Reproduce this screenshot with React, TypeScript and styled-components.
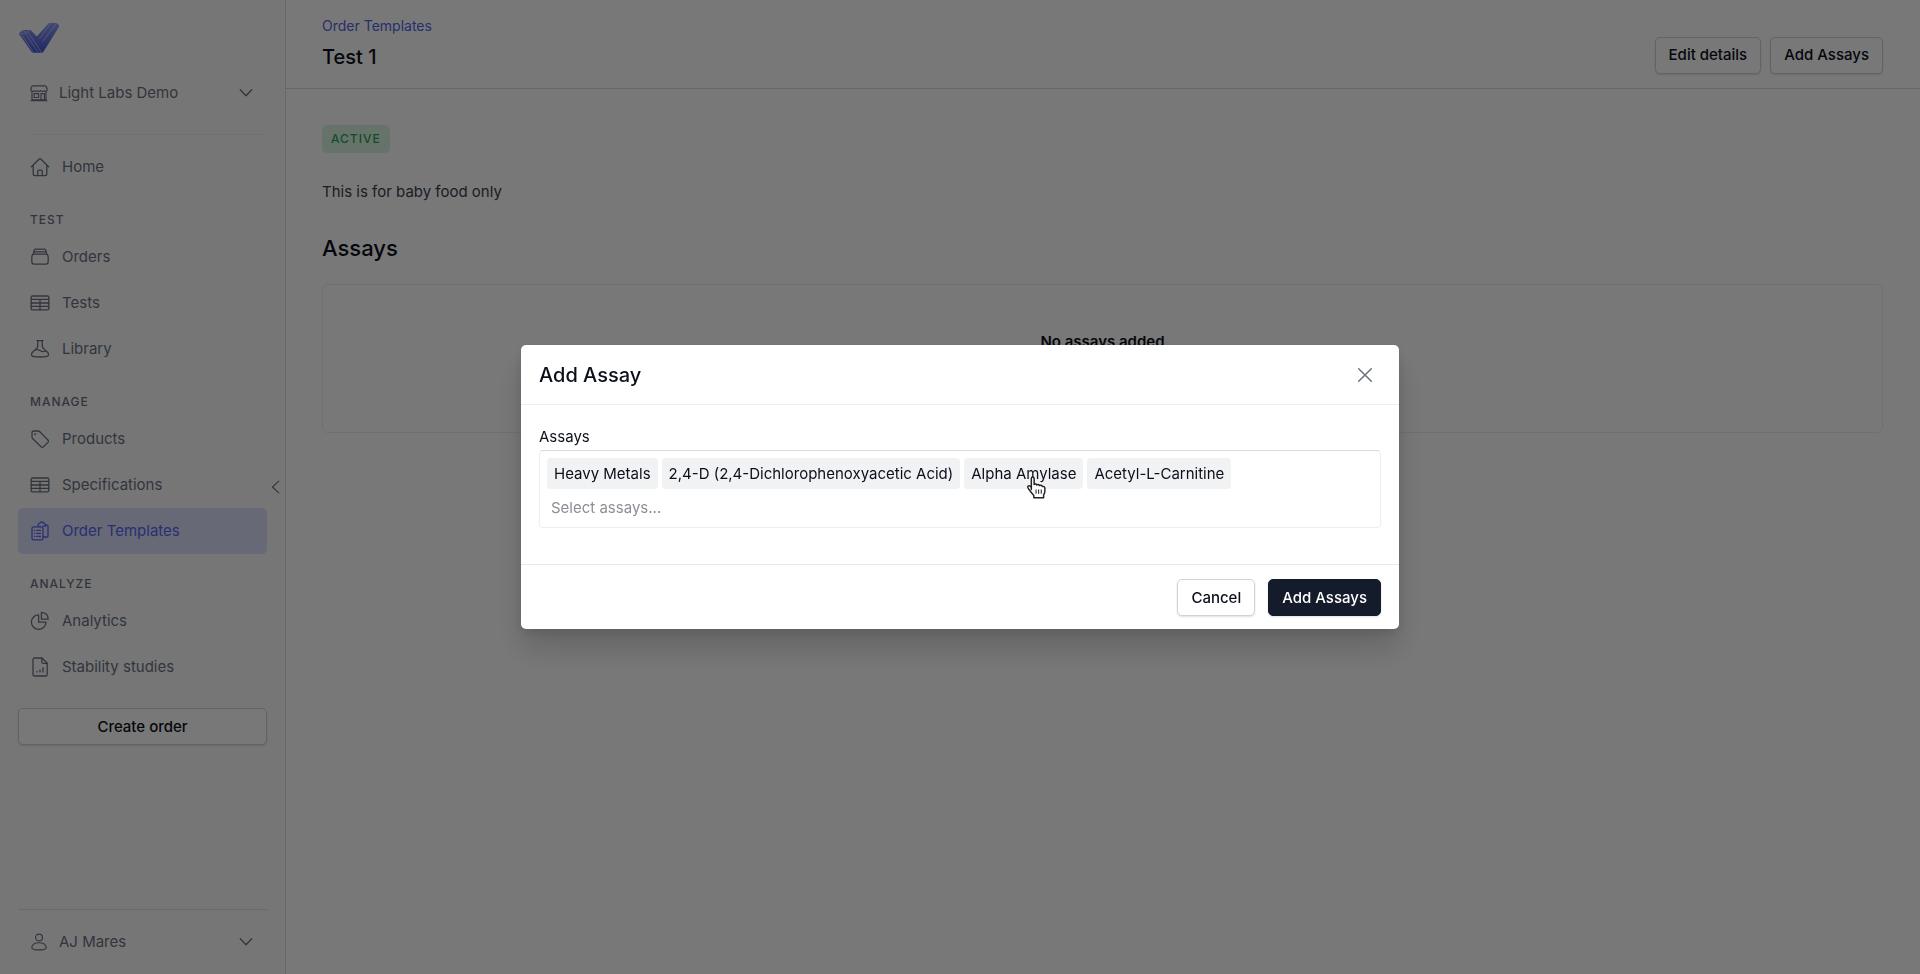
import React from "react";
import styled, { createGlobalStyle, css } from "styled-components";

const GlobalStyle = createGlobalStyle`
  *, *::before, *::after { box-sizing: border-box; }
  body {
    margin: 0;
    background: #ffffff;
    color: #0b0f1a;
    font-family: Inter, "Liberation Sans", sans-serif;
    font-size: 15px;
    line-height: 24px;
  }
  button, input { font: inherit; color: inherit; }
  h1, h2, h3, p { margin: 0; padding: 0; }
`;

const Page = styled.div`
  display: flex;
  min-height: 100vh;
`;

const Sidebar = styled.aside`
  position: relative;
  display: flex;
  flex-direction: column;
  flex: none;
  width: 286px;
  padding: 22px 18px 8px;
  background: #fbfbfd;
  border-right: 1px solid #dcdee4;
  color: #6b7280;
`;

const Logo = styled.svg`
  display: block;
  width: 42px;
  height: 32px;
`;

const Account = styled.button<{ $top?: boolean }>`
  display: flex;
  align-items: center;
  gap: 11px;
  width: 100%;
  height: 48px;
  padding: 0 12px;
  border: 0;
  background: none;
  text-align: left;
  svg { flex: none; width: 18px; height: 18px; }
  svg:last-child { margin-left: auto; }
  ${(p) => p.$top && css`margin: 15px 0 17px;`}
`;

const Rule = styled.hr<{ $inset?: boolean }>`
  margin: 0;
  border: 0;
  border-top: 1px solid ${(p) => (p.$inset ? "#eef0f4" : "#e0e2e8")};
  ${(p) => p.$inset && css`margin-left: 12px;`}
`;

const Nav = styled.nav`
  display: flex;
  flex-direction: column;
  padding-top: 9px;
`;

const Group = styled.h2`
  margin: 18px 0 2px;
  padding: 0 12px;
  font-size: 12px;
  line-height: 24px;
  font-weight: 500;
  letter-spacing: 1px;
`;

const Item = styled.a<{ $active?: boolean }>`
  display: flex;
  align-items: center;
  gap: 12px;
  height: 46px;
  padding: 0 12px;
  border-radius: 5px;
  color: ${(p) => (p.$active ? "#5664f5" : "inherit")};
  background: ${(p) => (p.$active ? "#dcdffb" : "none")};
  text-decoration: none;
  svg { flex: none; width: 20px; height: 20px; }
`;

const Collapse = styled.button`
  position: absolute;
  top: 50%;
  right: 0;
  display: flex;
  align-items: center;
  justify-content: center;
  width: 18px;
  height: 24px;
  margin-top: -12px;
  padding: 0;
  border: 0;
  background: none;
`;

const Button = styled.button<{ $primary?: boolean; $wide?: boolean }>`
  height: 37px;
  padding: 0 13px;
  border: 1px solid ${(p) => (p.$primary ? "#141b2b" : "#d0d2d6")};
  border-radius: 5px;
  background: ${(p) => (p.$primary ? "#141b2b" : "#ffffff")};
  color: ${(p) => (p.$primary ? "#ffffff" : "#0b0f1a")};
  box-shadow: 0 1px 2px rgba(0, 0, 0, 0.12);
  font-weight: 500;
  ${(p) => p.$wide && css`width: 100%; margin-top: 18px;`}
`;

const Footer = styled.div`
  display: flex;
  flex-direction: column;
  gap: 8px;
  margin-top: auto;
`;

const Main = styled.main`
  flex: 1;
  min-width: 0;
`;

const Header = styled.header`
  display: flex;
  align-items: center;
  justify-content: space-between;
  height: 89px;
  padding: 0 37px 0 36px;
  border-bottom: 1px solid #d6d8dc;
`;

const Crumb = styled.a`
  display: block;
  color: #5664e8;
  font-size: 14px;
  line-height: 22px;
  text-decoration: none;
`;

const Title = styled.h1`
  padding: 6px 0 2px;
  font-size: 20px;
  line-height: 28px;
  font-weight: 500;
`;

const Actions = styled.div`
  display: flex;
  gap: 9px;
  padding-top: 22px;
`;

const Content = styled.div`
  display: flex;
  flex-direction: column;
  align-items: flex-start;
  padding: 36px 37px 36px 36px;
`;

const Badge = styled.span`
  padding: 2px 9px;
  border-radius: 5px;
  background: #d9f5e2;
  color: #2f9e55;
  font-size: 12px;
  line-height: 24px;
  font-weight: 500;
  letter-spacing: 1px;
`;

const Description = styled.p`
  margin: 27px 0 28px;
  color: #3d404a;
`;

const SectionTitle = styled.h2`
  font-size: 22px;
  line-height: 32px;
  font-weight: 500;
`;

const Empty = styled.section`
  align-self: stretch;
  height: 149px;
  margin-top: 20px;
  padding-top: 45px;
  border: 1px solid #eceef1;
  border-radius: 6px;
  text-align: center;
`;

const EmptyTitle = styled.h3`
  font-size: 15px;
  line-height: 24px;
  font-weight: 600;
`;

const Backdrop = styled.div`
  position: fixed;
  inset: 0;
  display: flex;
  align-items: center;
  justify-content: center;
  background: rgba(0, 0, 0, 0.53);
`;

const Dialog = styled.section`
  width: 878px;
  max-width: 90vw;
  border-radius: 5px;
  background: #ffffff;
  box-shadow: 0 20px 30px rgba(0, 0, 0, 0.16), 0 4px 12px rgba(0, 0, 0, 0.1);
`;

const DialogHead = styled.header`
  display: flex;
  align-items: center;
  justify-content: space-between;
  height: 60px;
  padding: 0 25px 0 18px;
  border-bottom: 1px solid #eceef0;
`;

const DialogTitle = styled.h2`
  font-size: 20px;
  line-height: 28px;
  font-weight: 500;
`;

const Close = styled.button`
  display: flex;
  padding: 0;
  border: 0;
  background: none;
  color: #6b7280;
`;

const DialogBody = styled.div`
  padding: 20px 18px 36px;
`;

const Label = styled.label`
  display: block;
  line-height: 24px;
`;

const Field = styled.div`
  position: relative;
  display: flex;
  flex-wrap: wrap;
  gap: 4px;
  margin-top: 1px;
  padding: 7px 7px 6px;
  border: 1px solid #eceeef;
  border-top-color: #d8dadd;
  border-radius: 4px;
`;

const Tag = styled.button`
  height: 31px;
  padding: 0 7px;
  border: 0;
  border-radius: 4px;
  background: #f0f2f3;
`;

const TagInput = styled.input`
  flex: 1 0 100%;
  height: 28px;
  padding: 0 4px;
  border: 0;
  outline: none;
  background: none;
  &::placeholder { color: #8b8e94; opacity: 1; }
`;

const DialogFoot = styled.footer`
  display: flex;
  justify-content: flex-end;
  gap: 13px;
  padding: 14px 18px 13px;
  border-top: 1px solid #e6e8ea;
`;

const Pointer = styled.svg`
  position: absolute;
  left: 484px;
  top: 24px;
  width: 23px;
  height: 25px;
  pointer-events: none;
`;

type IconProps = { size?: number; children: React.ReactNode };
const Icon = ({ size = 20, children }: IconProps) => (
  <svg width={size} height={size} viewBox="0 0 20 20" fill="none" stroke="currentColor" strokeWidth="1.3" strokeLinecap="round" strokeLinejoin="round" aria-hidden="true">
    {children}
  </svg>
);

const icons = {
  store: <><path d="M2.2 8.2V17.6H17.8V8.2M1 18.6H19" /><path d="M3.5 2H16.5Q18.8 2.6 19 6V7.2Q17.6 9.2 16 7.4Q14 9.2 12 7.4Q10 9.2 8 7.4Q6 9.2 4 7.4Q2.4 9.2 1 7.2V6Q1.2 2.6 3.5 2Z" /><path d="M4.6 10.6H9.6V15H4.6ZM12.2 18V10.6H16V18" /></>,
  home: <><path d="M1.4 9.8 9.2 2Q10 1.2 10.8 2L18.6 9.8M3.2 8.2V17Q3.2 18.6 4.8 18.6H15.2Q16.8 18.6 16.8 17V8.2" /><path d="M7.8 18.4V14.2Q7.8 13.2 8.8 13.2H11.2Q12.2 13.2 12.2 14.2V18.4" /></>,
  orders: <><path d="M5.4 2.2H14.6M3.2 7.2 3.8 4.8H16.2L16.8 7.2M3.8 4.8Q4.2 2.2 5.4 2.2M16.2 4.8Q15.8 2.2 14.6 2.2" /><path d="M4 7.2H16Q18.2 7.4 18.2 10V14.5Q18.2 17 16 17.2H4Q1.8 17 1.8 14.5V10Q1.8 7.4 4 7.2Z" /></>,
  table: <><rect x="1.2" y="3" width="17.6" height="13.8" rx="1.2" /><path d="M1.2 6.4H18.8M1.2 10H18.8M1.2 13.4H18.8M10 6.4V16.8" /></>,
  flask: <><path d="M7 1.6H13M7.8 1.6V7.2Q7.6 8.6 6.4 9.6L2 13.8Q.2 17.4 4.6 17.6Q10 18.4 15.4 17.6Q19.8 17.4 18 13.8L13.6 9.6Q12.4 8.6 12.2 7.2V1.6" /><path d="M5.4 10.8Q8.4 10.4 10.4 11.8T15.4 12.2" /></>,
  tag: <><path d="M2 3.6V8Q2 9 2.8 9.8L11 17.8Q12.2 18.8 13.4 17.8L18 13.4Q19 12.2 18 11L9.8 2.8Q9 2 8 2H3.6Q2 2 2 3.6Z" /><circle cx="5.2" cy="5.2" r=".4" /></>,
  clipboard: <><path d="M15.6 4.2H17Q18 4.2 18 5.2V15Q18 16 17 16H13.2M8.2 5.2V3.4Q8.4 2.6 9.6 2.6Q10.2 1 11.8 1T14 2.6Q15.2 2.6 15.4 3.4V5.2H13" /><path d="M3.4 5.8H11.4Q13 6 13 7.4V17.2Q13 18.8 11.4 18.8H3.6Q2 18.8 2 17.2V7.4Q2 6 3.4 5.8Z" /><path d="M6.8 9.4H10.4M6.8 12.4H10.4M6.8 15.4H10.4M4.6 9.4H4.7M4.6 12.4H4.7M4.6 15.4H4.7" /></>,
  pie: <><path d="M8.6 3.8A7.3 7.3 0 1 0 16 11.2H8.6Z" /><path d="M11.4 1.4V8.2H18.2Q18 1.8 11.4 1.4Z" /></>,
  report: <><path d="M4.6 1H12L17.2 6.2V17.4Q17.2 19 15.6 19H4.6Q3 19 3 17.4V2.6Q3 1 4.6 1Z" /><path d="M11.8 1.2V4.8Q11.8 6.4 13.4 6.4H17M7 14.4V14.9M10 12.8V14.9M13 10.6V14.9" /></>,
  user: <><circle cx="10" cy="5" r="3.8" /><path d="M2 16Q2.8 10.8 10 10.8T18 16Q18 18.8 10 18.8T2 16Z" /></>,
};

const Chevron = () => <Icon size={18}><path d="M3.6 6.4 10 13 16.4 6.4" strokeWidth="1.5" /></Icon>;

type Entry = { label: string; icon: keyof typeof icons; active?: boolean };
const groups: { title: string; items: Entry[] }[] = [
  { title: "TEST", items: [{ label: "Orders", icon: "orders" }, { label: "Tests", icon: "table" }, { label: "Library", icon: "flask" }] },
  { title: "MANAGE", items: [{ label: "Products", icon: "tag" }, { label: "Specifications", icon: "table" }, { label: "Order Templates", icon: "clipboard", active: true }] },
  { title: "ANALYZE", items: [{ label: "Analytics", icon: "pie" }, { label: "Stability studies", icon: "report" }] },
];

const assays = ["Heavy Metals", "2,4-D (2,4-Dichlorophenoxyacetic Acid)", "Alpha Amylase", "Acetyl-L-Carnitine"];

export default function App() {
  return (
    <>
      <GlobalStyle />
      <Page>
        <Sidebar>
          <Logo viewBox="0 0 42 32" role="img" aria-label="Light Labs">
            <defs>
              <linearGradient id="mark" x1="0" y1="0" x2="0" y2="1">
                <stop offset="0" stopColor="#8b9cf0" />
                <stop offset="1" stopColor="#4354d6" />
              </linearGradient>
            </defs>
            <path d="M1 12Q1 10.6 5.4 8H12.6L18.8 14.4L29.6 2.4Q30.6 1 32 1H38.6Q41 2 41.2 4.6L25.6 29.6Q24.8 30.8 23.4 30.8H15.4Q14.2 30.8 13.4 29.6Z" fill="url(#mark)" />
            <path d="M1.4 11.4H7.4L12.6 8M4.6 9 9 10.4M3.4 12.4 15.6 30.4M7.4 11.4 20 30.4M10 10.2 23.6 30.6M33 1.2 21.4 16.6M38.4 1.4 24.6 19.6" fill="none" stroke="#c9d3fb" strokeWidth=".7" />
          </Logo>
          <Account $top type="button"><Icon size={18}>{icons.store}</Icon>Light Labs Demo<Chevron /></Account>
          <Rule $inset />
          <Nav aria-label="Main">
            <Item href="#home"><Icon>{icons.home}</Icon>Home</Item>
            {groups.map((g) => (
              <React.Fragment key={g.title}>
                <Group>{g.title}</Group>
                {g.items.map((i) => (
                  <Item key={i.label} href="#" $active={i.active}><Icon>{icons[i.icon]}</Icon>{i.label}</Item>
                ))}
              </React.Fragment>
            ))}
          </Nav>
          <Button type="button" $wide>Create order</Button>
          <Footer>
            <Rule />
            <Account type="button"><Icon size={18}>{icons.user}</Icon>AJ Mares<Chevron /></Account>
          </Footer>
          <Collapse type="button" aria-label="Collapse sidebar">
            <Icon size={14}><path d="M14 1.5 5 10 14 18.5" strokeWidth="1.6" /></Icon>
          </Collapse>
        </Sidebar>
        <Main>
          <Header>
            <div>
              <Crumb href="#">Order Templates</Crumb>
              <Title>Test 1</Title>
            </div>
            <Actions>
              <Button type="button">Edit details</Button>
              <Button type="button">Add Assays</Button>
            </Actions>
          </Header>
          <Content>
            <Badge>ACTIVE</Badge>
            <Description>This is for baby food only</Description>
            <SectionTitle>Assays</SectionTitle>
            <Empty><EmptyTitle>No assays added</EmptyTitle></Empty>
          </Content>
        </Main>
      </Page>
      <Backdrop>
        <Dialog role="dialog" aria-modal="true" aria-labelledby="dialog-title">
          <DialogHead>
            <DialogTitle id="dialog-title">Add Assay</DialogTitle>
            <Close type="button" aria-label="Close">
              <Icon size={18}><path d="M3 3 17 17M17 3 3 17" strokeWidth="1.7" /></Icon>
            </Close>
          </DialogHead>
          <DialogBody>
            <Label htmlFor="assays">Assays</Label>
            <Field>
              {assays.map((a) => <Tag key={a} type="button">{a}</Tag>)}
              <TagInput id="assays" placeholder="Select assays..." />
              <Pointer viewBox="0 0 22 24" aria-hidden="true">
                <path d="M7 14V3.5Q7 2 8.3 2T9.7 3.5V9.2Q11 8 12.3 9.6Q13.8 8.6 15 10.2Q16.6 9.4 17.6 11Q20 10.6 20 13V15.5Q20 17 18.8 19V21.8H9.4V19.6Q7 17 4.4 13.4Q2.8 11 4.2 10.4T7 12Z" fill="#fff" stroke="#222" strokeWidth="1.4" strokeLinejoin="round" />
                <path d="M11.5 14V18M14 14V18M16.5 14V18" stroke="#222" strokeWidth="1" />
              </Pointer>
            </Field>
          </DialogBody>
          <DialogFoot>
            <Button type="button">Cancel</Button>
            <Button type="button" $primary>Add Assays</Button>
          </DialogFoot>
        </Dialog>
      </Backdrop>
    </>
  );
}
